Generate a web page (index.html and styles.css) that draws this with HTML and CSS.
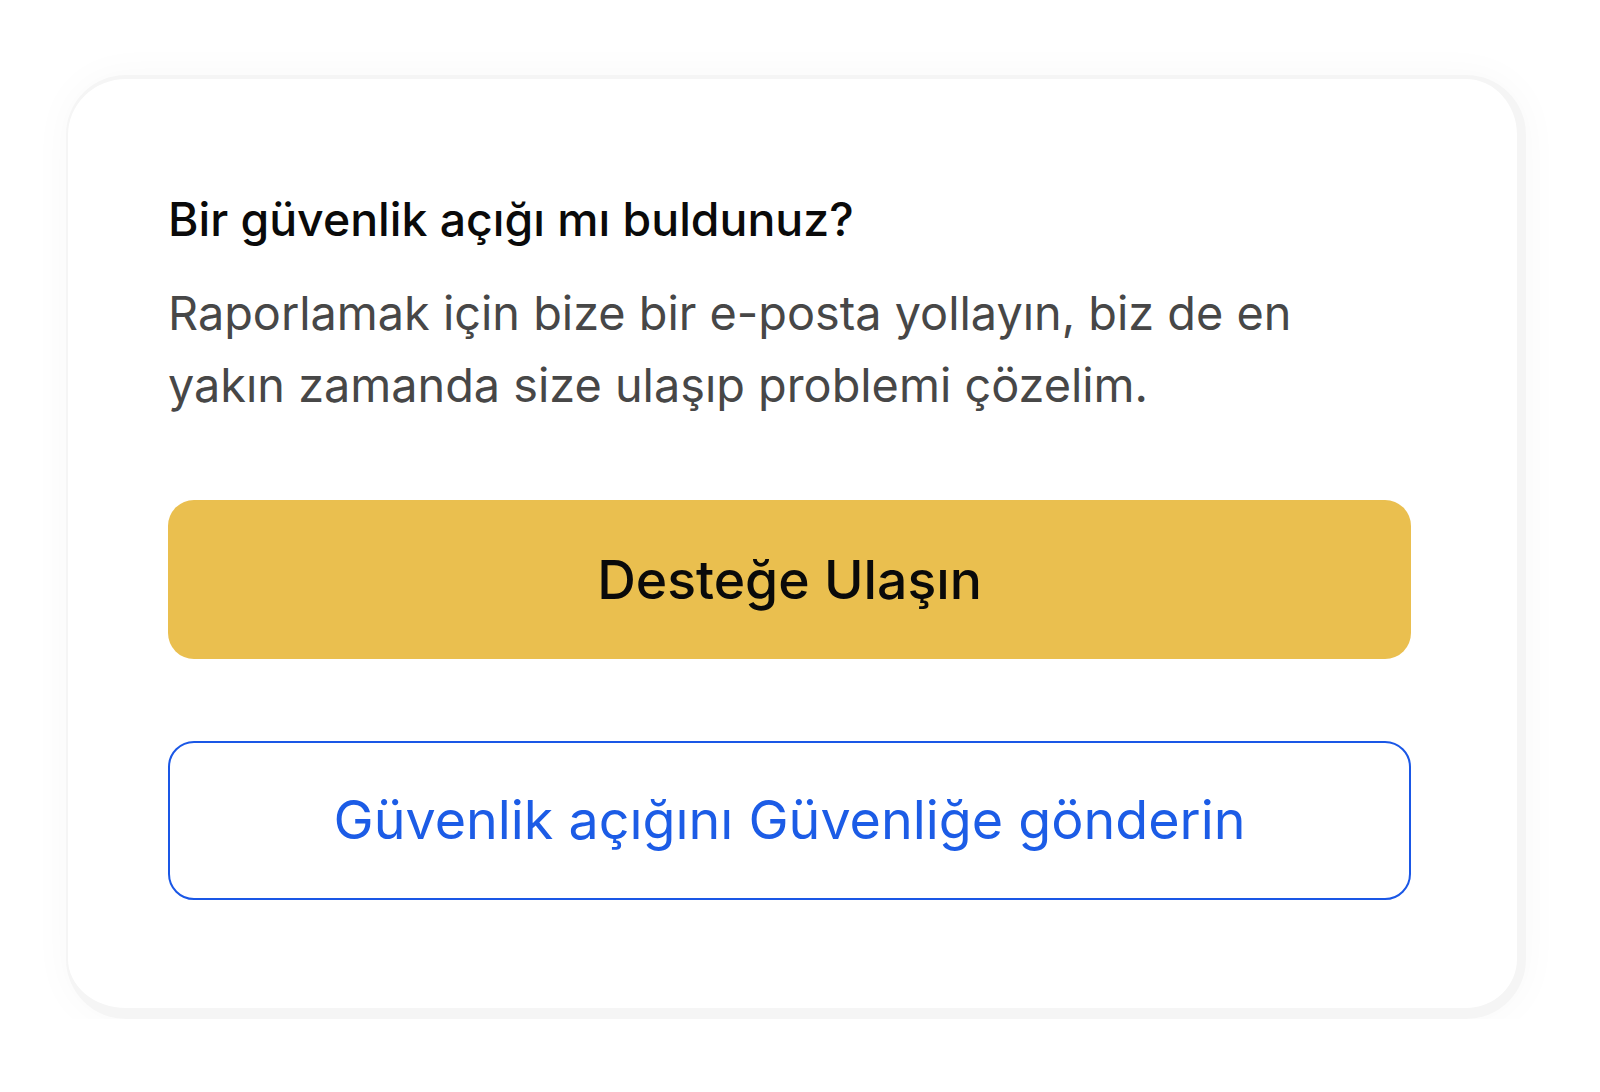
FILE: index.html
```html
<!DOCTYPE html>
<html lang="tr">
<head>
    <meta charset="UTF-8">
    <meta name="viewport" content="width=device-width, initial-scale=1.0">
    <title>Güvenlik açığı</title>
    <link rel="stylesheet" href="styles.css">
</head>
<body>
    <div class="card">
        <h2 class="title">Bir güvenlik açığı mı buldunuz?</h2>
        <p class="text">Raporlamak için bize bir e-posta yollayın, biz de en yakın zamanda size ulaşıp problemi çözelim.</p>
        <a class="btn btn-primary" href="#">Desteğe Ulaşın</a>
        <a class="btn btn-outline" href="#">Güvenlik açığını Güvenliğe gönderin</a>
    </div>
</body>
</html>
```
FILE: styles.css
```css
body { margin: 0; padding: 0; background: #fff; font-family: Inter, "Noto Sans", sans-serif; }
.card { width: 1460px; height: 944px; margin: 75px 0 0 66px; box-sizing: border-box; background: #fff; border: solid #f5f5f5; border-width: 4px 9px 11px 2px; border-radius: 60px; padding: 112px 106px 0 100px; box-shadow: 0 0 40px rgba(0, 0, 0, 0.03); }
.title { margin: 0; font-size: 46.4px; line-height: 56px; font-weight: 500; color: #0a0a0a; }
.text { margin: 30px 0 0; width: 1200px; font-size: 46.8px; line-height: 72px; color: #474747; }
.btn { display: flex; align-items: center; justify-content: center; box-sizing: border-box; height: 159px; border-radius: 26px; font-size: 53.5px; text-decoration: none; }
.btn-primary { margin-top: 79px; background: #eabf4f; color: #0a0a0a; font-weight: 500; }
.btn-outline { margin-top: 82px; border: 2px solid #1a57e6; color: #1c5ce6; font-size: 53.8px; padding-bottom: 3px; }
```
